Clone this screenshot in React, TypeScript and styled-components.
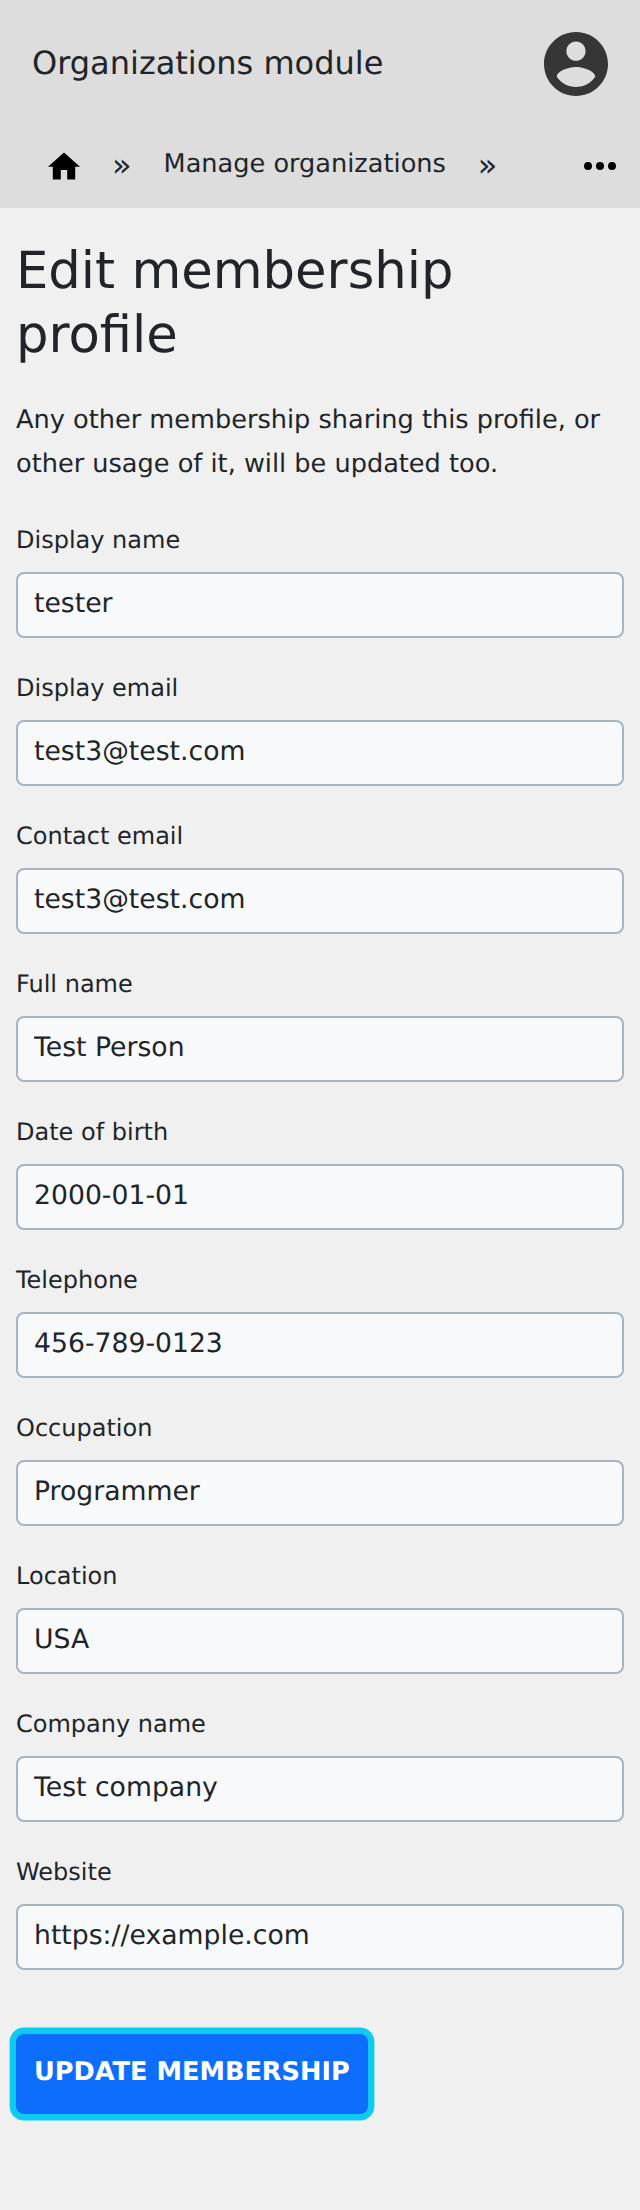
import React from "react";
import styled, { createGlobalStyle } from "styled-components";

const GlobalStyle = createGlobalStyle`
  *, *::before, *::after { box-sizing: border-box; }
  body {
    margin: 0;
    background: #f0f0f0;
    color: #212529;
    font-family: "DejaVu Sans", sans-serif;
    font-size: 25.6px;
    line-height: 1.7;
    text-rendering: geometricPrecision;
  }
`;

const Page = styled.div`
  min-height: 2210px;
`;

const Header = styled.header`
  height: 208px;
  background: #ddd;
`;

const TitleBar = styled.div`
  display: flex;
  align-items: center;
  justify-content: space-between;
  height: 128px;
  padding: 0 32px;
`;

const ModuleName = styled.span`
  font-size: 32px;
  line-height: 54px;
  padding-bottom: 2px;
`;

const Breadcrumbs = styled.nav`
  display: flex;
  gap: 32px;
  height: 80px;
  padding: 0 22px 0 48px;
`;

const HomeLink = styled.a`
  display: flex;
  padding-top: 24px;
`;

const Separator = styled.span`
  margin-top: 15px;
  font-size: 32px;
  line-height: 44px;
`;

const Crumb = styled.a`
  margin-top: 14px;
  line-height: 44px;
`;

const MoreButton = styled.a`
  display: flex;
  margin-left: auto;
  padding-top: 20px;
`;

const Main = styled.main`
  padding: 31px 16px 0;
`;

const Heading = styled.h1`
  margin: 0;
  font-size: 51.2px;
  font-weight: 400;
  line-height: 64px;
`;

const Intro = styled.p`
  margin: 31px 0 0;
  line-height: 44px;
`;

const Form = styled.form`
  display: flex;
  flex-direction: column;
  align-items: flex-start;
  padding-top: 34px;
`;

const Field = styled.label`
  display: flex;
  flex-direction: column;
  width: 100%;
  height: 148px;
  font-size: 24px;
  line-height: 40px;
`;

const Input = styled.input`
  height: 66px;
  margin-top: 12px;
  padding: 0 16px 3px;
  border: 2px solid #a7b4c2;
  border-radius: 8px;
  background: #f8f9fb;
  color: #212529;
  font: 26.667px "DejaVu Sans", sans-serif;
  text-rendering: inherit;
  outline: none;
`;

const SubmitButton = styled.button`
  height: 80px;
  margin-top: 34px;
  padding: 0 18px 4px;
  border: 0;
  border-radius: 8px;
  background: #0d6efd;
  box-shadow: 0 0 0 6.4px #0dcaf0;
  color: #fff;
  font: bold 25.6px "DejaVu Sans", sans-serif;
  text-rendering: inherit;
  white-space: nowrap;
`;

const fields = [
  ["Display name", "tester"],
  ["Display email", "test3@test.com"],
  ["Contact email", "test3@test.com"],
  ["Full name", "Test Person"],
  ["Date of birth", "2000-01-01"],
  ["Telephone", "456-789-0123"],
  ["Occupation", "Programmer"],
  ["Location", "USA"],
  ["Company name", "Test company"],
  ["Website", "https://example.com"],
];

const AccountIcon = () => (
  <svg width="64" height="64" viewBox="2 2 20 20" fill="#363636">
    <path d="M12 2C6.48 2 2 6.48 2 12s4.48 10 10 10 10-4.48 10-10S17.52 2 12 2zm0 3c1.66 0 3 1.34 3 3s-1.34 3-3 3-3-1.34-3-3 1.34-3 3-3zm0 14.2c-2.5 0-4.71-1.28-6-3.22.03-1.99 4-3.08 6-3.08 1.99 0 5.97 1.09 6 3.08-1.29 1.94-3.5 3.22-6 3.22z" />
  </svg>
);

const HomeIcon = () => (
  <svg width="32" height="28" viewBox="2 2.75 20 17.5">
    <path d="M10 20v-6h4v6h5v-8h3L12 3 2 12h3v8z" />
  </svg>
);

const MoreIcon = () => (
  <svg width="36" height="36" viewBox="0 0 36 36">
    <circle cx="6" cy="18" r="4" />
    <circle cx="18" cy="18" r="4" />
    <circle cx="30" cy="18" r="4" />
  </svg>
);

export default function App() {
  return (
    <Page>
      <GlobalStyle />
      <Header>
        <TitleBar>
          <ModuleName>Organizations module</ModuleName>
          <AccountIcon />
        </TitleBar>
        <Breadcrumbs>
          <HomeLink><HomeIcon /></HomeLink>
          <Separator>»</Separator>
          <Crumb>Manage organizations</Crumb>
          <Separator>»</Separator>
          <MoreButton><MoreIcon /></MoreButton>
        </Breadcrumbs>
      </Header>
      <Main>
        <Heading>Edit membership profile</Heading>
        <Intro>Any other membership sharing this profile, or other usage of it, will be updated too.</Intro>
        <Form>
          {fields.map(([label, value]) => (
            <Field key={label}>
              {label}
              <Input defaultValue={value} />
            </Field>
          ))}
          <SubmitButton type="button">UPDATE MEMBERSHIP</SubmitButton>
        </Form>
      </Main>
    </Page>
  );
}
